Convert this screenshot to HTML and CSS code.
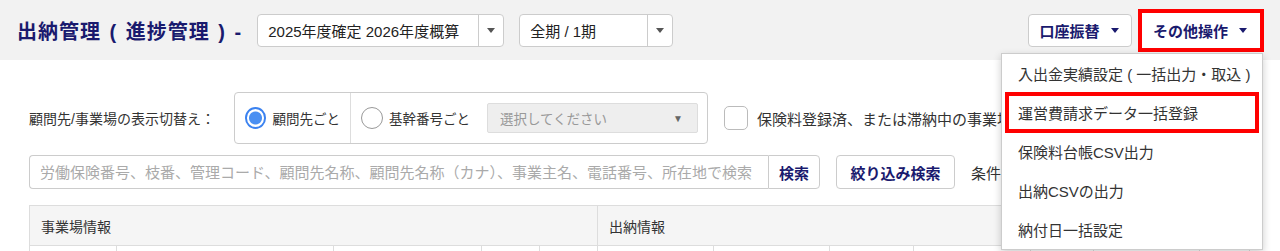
FILE: index.html
```html
<!DOCTYPE html>
<html lang="ja">
<head>
    <meta charset="UTF-8">
    <meta name="viewport" content="width=device-width, initial-scale=1.0">
    <title>出納管理</title>
    <link rel="stylesheet" href="styles.css">
</head>
<body>
    <div class="page-header">
        <h1 class="page-title">出納管理 ( 進捗管理 ) -</h1>

        <div class="select year-select">
            <span class="select-text">2025年度確定 2026年度概算</span>
            <span class="select-caret"><i class="caret"></i></span>
        </div>

        <div class="select term-select">
            <span class="select-text">全期 / 1期</span>
            <span class="select-caret"><i class="caret"></i></span>
        </div>

        <div class="header-actions">
            <button class="button action">口座振替<i class="caret navy"></i></button>
            <div class="highlight">
                <button class="button action open">その他操作<i class="caret navy"></i></button>
            </div>
        </div>
    </div>

    <ul class="dropdown-menu">
        <li>入出金実績設定 ( 一括出力・取込 )</li>
        <li class="marked">運営費請求データ一括登録</li>
        <li>保険料台帳CSV出力</li>
        <li>出納CSVの出力</li>
        <li>納付日一括設定</li>
    </ul>

    <div class="content">
        <div class="display-row">
            <span class="row-label">顧問先/事業場の表示切替え：</span>
            <div class="radio-group">
                <label class="radio-option first">
                    <span class="radio checked"></span>
                    <span>顧問先ごと</span>
                </label>
                <label class="radio-option">
                    <span class="radio"></span>
                    <span>基幹番号ごと</span>
                    <span class="select-disabled">
                        <span>選択してください</span>
                        <span class="small-arrow">▼</span>
                    </span>
                </label>
            </div>
            <label class="check-option">
                <span class="checkbox"></span>
                <span>保険料登録済、または滞納中の事業場のみ表示</span>
            </label>
        </div>

        <div class="search-row">
            <div class="search-box">
                <input class="search-input" type="text" placeholder="労働保険番号、枝番、管理コード、顧問先名称、顧問先名称（カナ）、事業主名、電話番号、所在地で検索">
                <button class="button search-btn">検索</button>
            </div>
            <button class="button filter-btn">絞り込み検索</button>
            <span class="condition">条件</span>
        </div>

        <table class="ledger">
            <colgroup>
                <col class="c1"><col class="c2"><col class="c3"><col class="c4"><col class="c5">
                <col class="c6"><col class="c7"><col class="c8"><col class="c9"><col class="c10">
                <col class="c11"><col>
            </colgroup>
            <tr class="group-row">
                <th colspan="5">事業場情報</th>
                <th colspan="7">出納情報</th>
            </tr>
            <tr class="sub-row">
                <td></td><td></td><td></td><td></td><td></td><td></td>
                <td></td><td></td><td></td><td></td><td></td>
                <td>※在籍</td>
            </tr>
        </table>
    </div>
</body>
</html>
```

FILE: styles.css
```css
body {
    margin: 0;
    height: 251px;
    overflow: hidden;
    background: #fff;
    font-family: "Liberation Sans", "Noto Sans CJK JP", sans-serif;
    color: #333;
}

.page-header {
    display: flex;
    align-items: center;
    height: 60px;
    padding: 0 16px 0 17px;
    background-color: #f2f2f2;
}

.page-title {
    margin: 0 15px 0 0;
    font-size: 20px;
    font-weight: bold;
    letter-spacing: 1px;
    word-spacing: 2px;
    color: #1a1a6e;
    white-space: nowrap;
}

.select {
    display: flex;
    height: 33px;
    box-sizing: border-box;
    background: #fff;
    border: 1px solid #ccc;
    border-radius: 4px;
    font-size: 15px;
    color: #222;
}

.year-select {
    width: 247px;
}

.term-select {
    width: 154px;
    margin-left: 15px;
}

.select-text {
    flex: 1;
    display: flex;
    align-items: center;
    padding-left: 10px;
    white-space: nowrap;
}

.select-caret {
    display: flex;
    align-items: center;
    justify-content: center;
    width: 24px;
    border-left: 1px solid #ccc;
}

.caret {
    display: inline-block;
    width: 0;
    height: 0;
    border-left: 4px solid transparent;
    border-right: 4px solid transparent;
    border-top: 5px solid #555;
}

.caret.navy {
    border-top-color: #1a1a6e;
    margin-left: 11px;
}

.header-actions {
    display: flex;
    align-items: center;
    margin-left: auto;
}

.button {
    font-family: inherit;
    background: #fff;
    border: 1px solid #ccc;
    border-radius: 4px;
    cursor: pointer;
}

.action {
    display: inline-flex;
    align-items: center;
    justify-content: center;
    height: 33px;
    padding: 0 6px 0 4px;
    font-size: 15px;
    font-weight: bold;
    color: #1a1a6e;
    white-space: nowrap;
}

.header-actions > .action {
    width: 104px;
    margin-right: 6px;
}

.highlight {
    border: 4px solid #ff0000;
}

.action.open {
    width: 118px;
    height: 35px;
    border: none;
    border-radius: 0;
}

.dropdown-menu {
    position: absolute;
    top: 53px;
    left: 1001px;
    width: 262px;
    margin: 0;
    padding: 0;
    list-style: none;
    box-sizing: border-box;
    background: #fff;
    border: 1px solid #ccc;
    box-shadow: 0 3px 8px rgba(0, 0, 0, 0.2);
    z-index: 10;
}

.dropdown-menu li {
    display: flex;
    align-items: center;
    height: 39px;
    padding-left: 16px;
    font-size: 15px;
    color: #333;
    white-space: nowrap;
}

.dropdown-menu li.marked {
    height: 41px;
    margin: -1px 3px;
    padding-left: 13px;
    box-shadow: inset 0 0 0 4px #ff0000;
}

.content {
    padding: 32px 30px 0 29px;
}

.display-row {
    display: flex;
    align-items: center;
    height: 52px;
}

.row-label {
    font-size: 14px;
    color: #333;
    margin-right: 19px;
    white-space: nowrap;
}

.radio-group {
    display: flex;
    height: 52px;
    width: 474px;
    box-sizing: border-box;
    border: 1px solid #ccc;
    border-radius: 4px;
}

.radio-option {
    display: flex;
    align-items: center;
    padding: 0 10px;
    font-size: 13.5px;
    color: #333;
    white-space: nowrap;
}

.radio-option.first {
    width: 116px;
    box-sizing: border-box;
    border-right: 1px solid #ddd;
}

.radio {
    width: 22px;
    height: 22px;
    margin-right: 6px;
    box-sizing: border-box;
    border: 1.5px solid #999;
    border-radius: 50%;
    background: #fff;
}

.radio.checked {
    border: 2px solid #3b82f0;
    background: radial-gradient(circle, #4a8ff2 0, #4a8ff2 6px, #fff 7px);
}

.select-disabled {
    display: flex;
    align-items: center;
    justify-content: space-between;
    width: 211px;
    height: 30px;
    margin-left: 17px;
    padding: 0 14px 0 12px;
    box-sizing: border-box;
    background: #eee;
    border: 1px solid #ddd;
    border-radius: 2px;
    font-size: 13.5px;
    color: #999;
}

.small-arrow {
    font-size: 10px;
    color: #666;
}

.check-option {
    display: flex;
    align-items: center;
    margin-left: 16px;
    font-size: 15px;
    color: #333;
    white-space: nowrap;
}

.checkbox {
    width: 24px;
    height: 24px;
    margin-right: 9px;
    box-sizing: border-box;
    border: 1px solid #bbb;
    border-radius: 5px;
    background: #fff;
}

.search-row {
    display: flex;
    align-items: center;
    margin-top: 11px;
}

.search-box {
    display: flex;
    height: 34px;
}

.search-input {
    width: 739px;
    height: 34px;
    box-sizing: border-box;
    padding: 0 10px;
    font-family: inherit;
    font-size: 15px;
    border: 1px solid #ccc;
    border-right: none;
    border-radius: 4px 0 0 4px;
    outline: none;
}

.search-input::placeholder {
    color: #aaa;
}

.search-btn {
    width: 52px;
    height: 34px;
    border-radius: 0 4px 4px 0;
    font-size: 15px;
    font-weight: bold;
    color: #1a1a6e;
}

.filter-btn {
    width: 119px;
    height: 34px;
    margin-left: 16px;
    font-size: 15px;
    font-weight: bold;
    color: #1a1a6e;
}

.condition {
    margin-left: 16px;
    font-size: 15px;
    color: #333;
}

.ledger {
    width: 1221px;
    margin-top: 16px;
    border-collapse: collapse;
    table-layout: fixed;
}

.ledger .c1 { width: 87px; }
.ledger .c2 { width: 217px; }
.ledger .c3 { width: 148px; }
.ledger .c4 { width: 58px; }
.ledger .c5 { width: 58px; }
.ledger .c6 { width: 116px; }
.ledger .c7 { width: 116px; }
.ledger .c8 { width: 84px; }
.ledger .c9 { width: 117px; }
.ledger .c10 { width: 63px; }
.ledger .c11 { width: 106px; }

.ledger th,
.ledger td {
    border: 1px solid #ddd;
}

.group-row th {
    height: 39px;
    padding: 0 11px;
    background: #f5f5f5;
    font-size: 14px;
    font-weight: normal;
    text-align: left;
    color: #333;
}

.sub-row td {
    height: 40px;
    padding: 2px 6px 0;
    vertical-align: top;
    font-size: 14px;
    color: #333;
}
```
